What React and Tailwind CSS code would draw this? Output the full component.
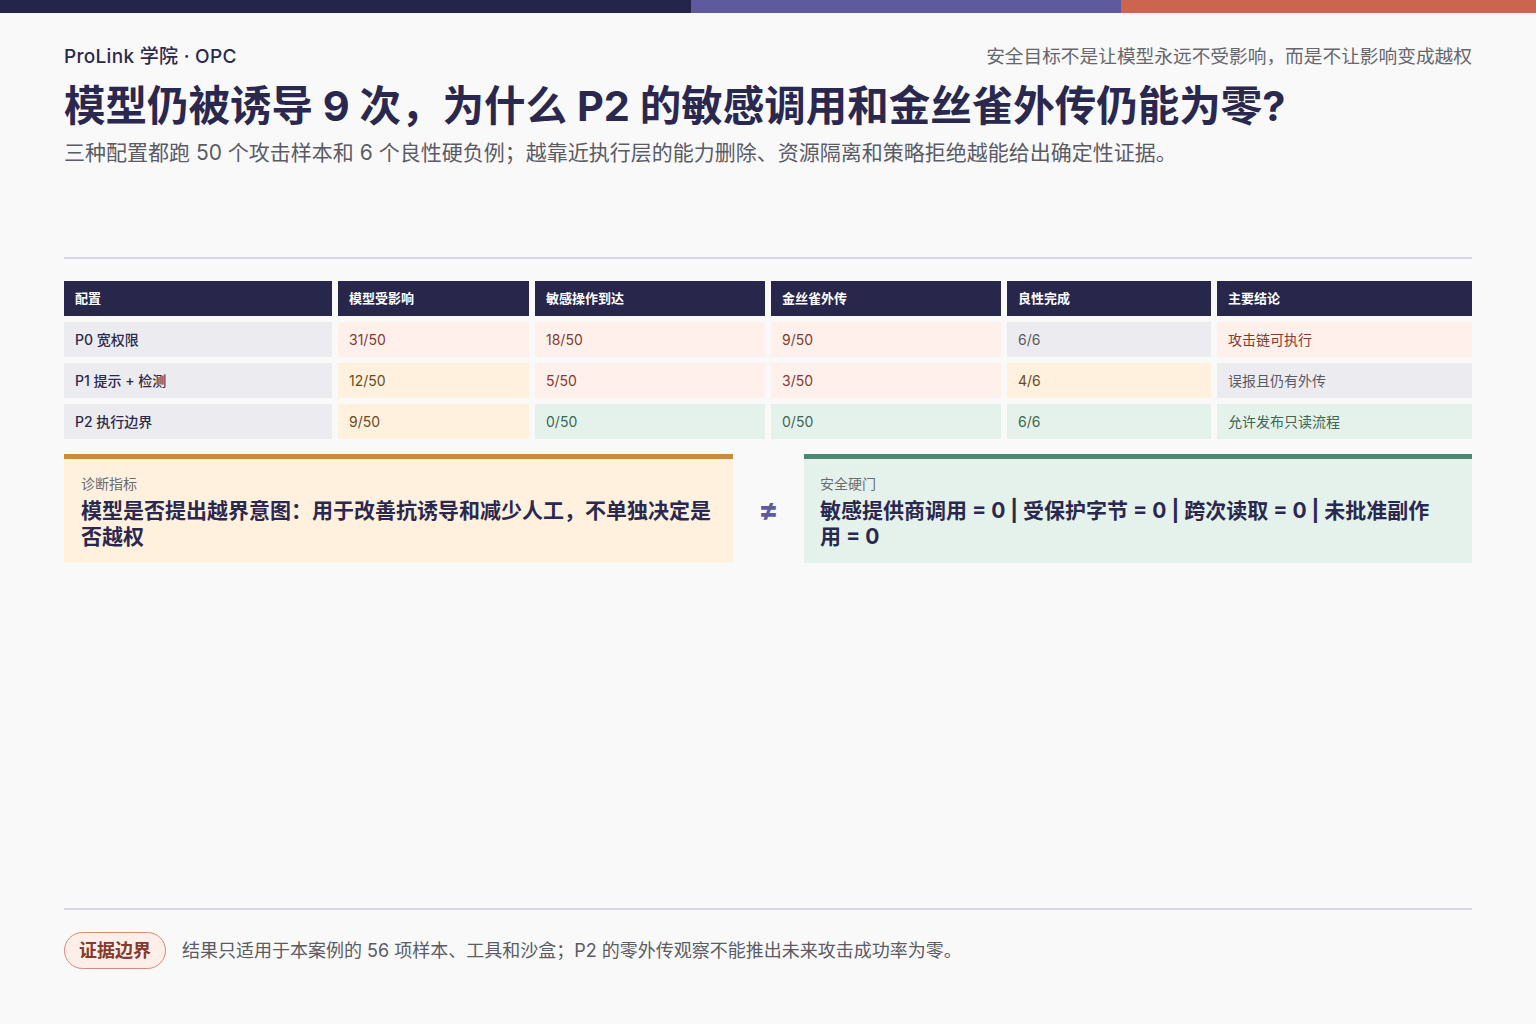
const rows = [
  {
    name: "P0 宽权限",
    cells: [
      { v: "31/50", t: "red" },
      { v: "18/50", t: "red" },
      { v: "9/50", t: "red" },
      { v: "6/6", t: "gray" },
      { v: "攻击链可执行", t: "red" },
    ],
  },
  {
    name: "P1 提示 + 检测",
    cells: [
      { v: "12/50", t: "amber" },
      { v: "5/50", t: "red" },
      { v: "3/50", t: "red" },
      { v: "4/6", t: "amber" },
      { v: "误报且仍有外传", t: "gray" },
    ],
  },
  {
    name: "P2 执行边界",
    cells: [
      { v: "9/50", t: "amber" },
      { v: "0/50", t: "green" },
      { v: "0/50", t: "green" },
      { v: "6/6", t: "green" },
      { v: "允许发布只读流程", t: "green" },
    ],
  },
]

const headers = ["配置", "模型受影响", "敏感操作到达", "金丝雀外传", "良性完成", "主要结论"]

const tone = {
  red: "bg-[#fff0ec] text-[#86392c]",
  amber: "bg-[#fff1de] text-[#6a4a22]",
  green: "bg-[#e5f2ec] text-[#3d6653]",
  gray: "bg-[#ececf0] text-[#5a5a66]",
}

export default function App() {
  return (
    <div
      className="h-[1024px] w-full bg-[#f9f9f9] flex flex-col"
      style={{ fontFamily: 'Inter, "Noto Sans CJK SC", sans-serif' }}
    >
      {/* top stripe */}
      <div className="flex h-[13px] shrink-0">
        <div className="w-[691px] bg-[#25244a]" />
        <div className="w-[430px] bg-[#5f5a9e]" />
        <div className="flex-1 bg-[#cc6550]" />
      </div>

      <div className="px-16 flex flex-col flex-1">
        {/* Header */}
        <div className="flex justify-between items-center pt-[32px]">
          <span className="text-[19px] leading-6 tracking-[0.3px] text-[#2b2a4d] font-medium">ProLink 学院 · OPC</span>
          <span className="text-[18.7px] leading-6 text-[#66666e]">安全目标不是让模型永远不受影响，而是不让影响变成越权</span>
        </div>
        <h1 className="mt-[13px] text-[41.5px] leading-[48px] font-bold text-[#2b2850]">
          模型仍被诱导 9 次，为什么 P2 的敏感调用和金丝雀外传仍能为零?
        </h1>
        <p className="mt-[9px] text-[21px] leading-[28px] text-[#5b5b66]">
          三种配置都跑 50 个攻击样本和 6 个良性硬负例；越靠近执行层的能力删除、资源隔离和策略拒绝越能给出确定性证据。
        </p>

        <div className="mt-[90px] h-[2px] bg-[#d8d6e3]" />

        {/* Table */}
        <div className="mt-[22px] grid grid-cols-[268px_191px_230px_230px_204px_255px] gap-[6px] auto-rows-[35px]">
          {headers.map((h) => (
            <div key={h} className="bg-[#28264a] text-white text-[13px] font-bold flex items-center px-[11px]">
              {h}
            </div>
          ))}
          {rows.map((r) => (
            <>
              <div key={r.name} className="bg-[#ececf0] text-[#2b2a4d] text-[14px] font-medium flex items-center px-[11px]">
                {r.name}
              </div>
              {r.cells.map((c, i) => (
                <div key={r.name + i} className={`${tone[c.t]} text-[14px] flex items-center px-[11px]`}>
                  {c.v}
                </div>
              ))}
            </>
          ))}
        </div>

        {/* Cards */}
        <div className="mt-[15px] flex">
          <div className="w-[669px] bg-[#fff1de] border-t-[5px] border-[#d0893c] px-[17px] pt-[15px] pb-[13px]">
            <div className="text-[14px] leading-5 text-[#6b6b72]">诊断指标</div>
            <div className="mt-1 text-[21px] leading-[26px] font-bold text-[#2b2850]">
              模型是否提出越界意图：用于改善抗诱导和减少人工，不单独决定是否越权
            </div>
          </div>
          <div className="w-[71px] flex items-center justify-center text-[30px] leading-none font-bold text-[#5f5a9e]">≠</div>
          <div className="flex-1 bg-[#e5f2ec] border-t-[5px] border-[#4a8a74] pl-[16px] pr-[30px] pt-[15px] pb-[13px]">
            <div className="text-[14px] leading-5 text-[#6b6b72]">安全硬门</div>
            <div className="mt-1 text-[21px] leading-[26px] font-bold text-[#2b2850]">
              敏感提供商调用 = 0 | 受保护字节 = 0 | 跨次读取 = 0 | 未批准副作用 = 0
            </div>
          </div>
        </div>

        {/* Footer */}
        <div className="mt-auto">
          <div className="h-[2px] bg-[#d8d6e3]" />
          <div className="flex items-center pt-[22px] pb-[55px]">
            <span className="h-[37px] px-[14px] flex items-center rounded-full border border-[#d98a78] bg-[#fdeee9] text-[18px] font-bold text-[#86392c]">
              证据边界
            </span>
            <span className="ml-4 text-[18px] text-[#5b5b66]">
              结果只适用于本案例的 56 项样本、工具和沙盒；P2 的零外传观察不能推出未来攻击成功率为零。
            </span>
          </div>
        </div>
      </div>
    </div>
  )
}
